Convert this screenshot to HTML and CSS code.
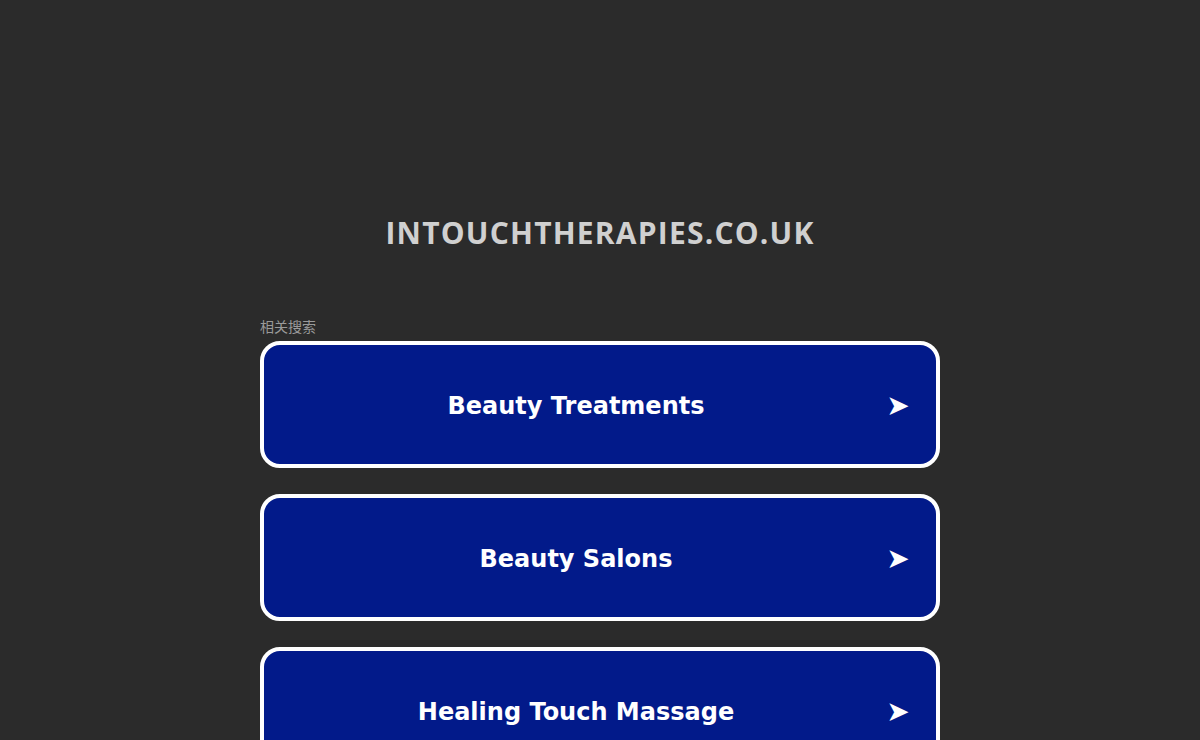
FILE: index.html
```html
<!DOCTYPE html>
<html>
<head>
<meta charset="utf-8">
<link rel="stylesheet" href="styles.css">
</head>
<body>
<div class="page">
  <h1 class="domain">intouchtherapies.co.uk</h1>
  <div class="related">
    <div class="label">相关搜索</div>
    <a class="btn" href="#"><span class="txt">Beauty Treatments</span><span class="arrow">➤</span></a>
    <a class="btn" href="#"><span class="txt">Beauty Salons</span><span class="arrow">➤</span></a>
    <a class="btn" href="#"><span class="txt">Healing Touch Massage</span><span class="arrow">➤</span></a>
  </div>
</div>
</body>
</html>
```
FILE: styles.css
```css
html, body {
  margin: 0;
  padding: 0;
  background: #2b2b2b;
  height: 100%;
  overflow: hidden;
}
.page {
  display: flex;
  flex-direction: column;
  align-items: center;
}
.domain {
  margin: 0;
  padding-top: 213px;
  font-family: "Open Sans", "Liberation Sans", sans-serif;
  font-weight: 700;
  font-size: 30px;
  letter-spacing: 1.2px;
  line-height: 40px;
  color: #d0d0d0;
  text-transform: uppercase;
}
.related {
  width: 680px;
  margin-top: 64px;
  display: flex;
  flex-direction: column;
}
.label {
  font-family: "Noto Sans CJK SC", "Noto Sans", sans-serif;
  font-size: 14px;
  line-height: 18px;
  color: #9a9a9a;
  margin-bottom: 6px;
}
.btn {
  box-sizing: border-box;
  height: 127px;
  border: 4px solid #ffffff;
  border-radius: 20px;
  background: #021a8a;
  display: flex;
  align-items: center;
  text-decoration: none;
  color: #ffffff;
  margin-bottom: 26px;
  padding: 2px 26px 0 2px;
}
.txt {
  flex: 1;
  text-align: center;
  font-family: "DejaVu Sans", Verdana, sans-serif;
  font-weight: 700;
  font-size: 24px;
}
.arrow {
  font-family: "DejaVu Sans", sans-serif;
  font-size: 28px;
  width: 24px;
  text-align: center;
}
```
